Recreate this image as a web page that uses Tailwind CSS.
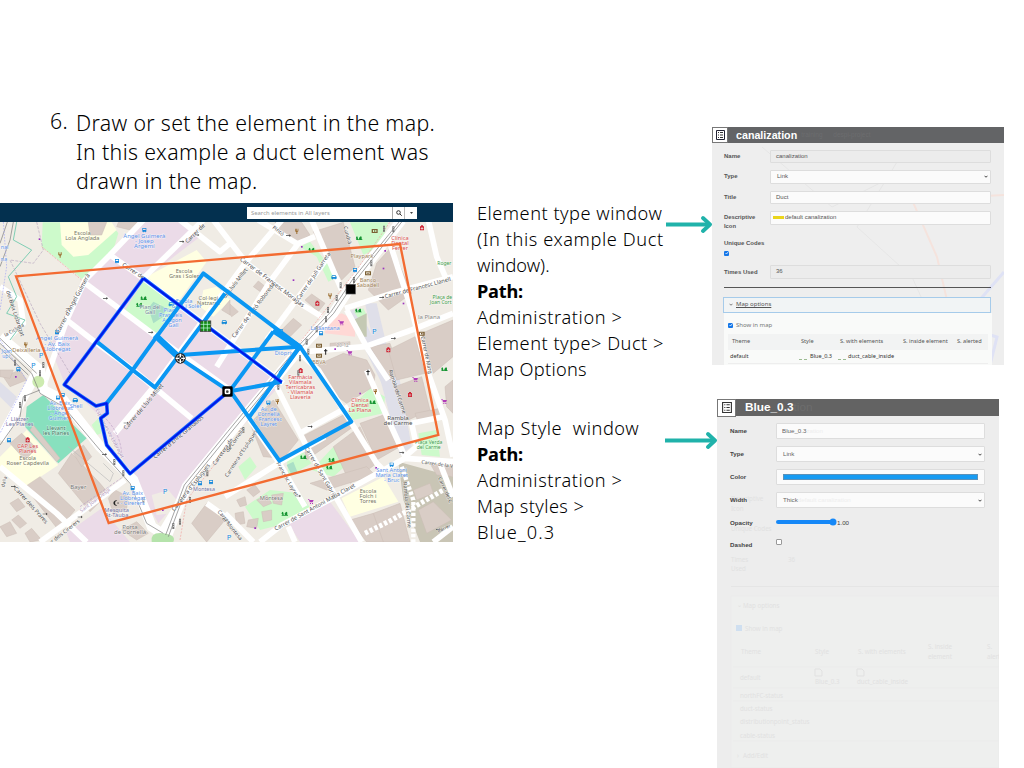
<!DOCTYPE html>
<html lang="en">
<head>
<meta charset="utf-8">
<title>Draw the element in the map</title>
<script src="https://cdn.jsdelivr.net/npm/@tailwindcss/browser@4"></script>
</head>
<body class="bg-white">
<main class="flex h-[768px] w-[1024px] overflow-hidden bg-white text-black font-['Noto_Sans',sans-serif]">

  <section class="flex w-[453px] shrink-0 flex-col">
    <div class="flex h-[203px] items-start pt-[108px] pl-[50px] text-[21.3px] leading-[29px] font-light tracking-[0.33px]">
      <span class="-mt-[2px] w-[26px] shrink-0">6.</span>
      <div class="whitespace-nowrap">
        <p>Draw or set the element in the map.</p>
        <p class="tracking-[0.38px]">In this example a duct element was</p>
        <p class="tracking-[0.4px]">drawn in the map.</p>
      </div>
    </div>
    <div class="flex h-[19px] shrink-0 items-center bg-[#03304f] pl-[247px]">
      <div class="flex h-[12px] w-[170px] bg-white text-[5.9px] leading-[12px] text-[#999]">
        <span class="w-[146px] border-r border-[#aaa] pl-[4px] whitespace-nowrap">Search elements in All layers</span>
        <span class="flex w-[12px] items-center justify-center border-r border-[#bbb]">
          <svg class="h-[6px] w-[6px]" viewBox="0 0 12 12" fill="none" stroke="#333" stroke-width="2"><circle cx="5" cy="5" r="3.6"/><path d="M7.8 7.8 11.5 11.5"/></svg>
        </span>
        <span class="flex flex-1 items-center justify-center"><svg class="h-[2px] w-[3px]" viewBox="0 0 6 4"><path d="M0 0H6L3 4Z" fill="#444"/></svg></span>
      </div>
    </div>
    <svg class="block h-[320px] w-[453px] shrink-0" viewBox="0 66 1359 960" preserveAspectRatio="none">
      <rect y="60" width="1359" height="970" fill="#f0ece5"/>
      <!-- land use -->
      <g fill="#ebdbe8">
        <path d="M150 440 250 240 330 165 430 67H545L600 110 430 240 690 430 850 545 690 720 475 970 390 820 300 650 190 540Z"/>
        <path d="M200 1000 305 925 390 1026H210Z"/><path d="M865 970 990 905 1080 1026H900Z"/>
      </g>
      <path d="M455 885 505 870 530 900 515 940 470 945Z" fill="#f0ece5"/>
      <g fill="#dfdfe9"><path d="M1040 335 1075 325 1175 525 1225 700 1200 760 1150 560Z"/><path d="M1095 310 1130 310 1180 520 1140 520Z"/><path d="M1135 515 1195 515 1235 740 1200 765Z"/><path d="M1190 570 1270 545 1275 575 1200 590Z"/><path d="M0 545 50 590 40 630 0 590Z"/></g>
      <g fill="#cdfacb">
        <path d="M128 67 125 140 250 240 340 150 355 100 330 67Z"/><path d="M430 245 375 330 465 405 535 310Z"/>
        <path d="M1050 67 1090 165 1140 140 1165 67Z"/><path d="M900 140 930 125 1015 230 985 245 950 170Z"/>
        <path d="M1062 335 1090 325 1100 345 1075 355Z"/><path d="M735 920 810 870 900 880 935 930 860 970 780 990Z"/>
        <path d="M860 770 900 745 935 790 865 830Z"/><path d="M935 810 1000 740 1045 790 1000 830Z"/>
        <path d="M1030 645 1110 565 1155 590 1150 640 1060 660Z"/><path d="M715 800 750 770 770 800 735 840Z"/>
        <path d="M1255 700 1310 690 1320 770 1265 765Z"/><path d="M275 675 295 655 305 700 290 705Z"/>
        <path d="M1290 850 1315 840 1330 870 1300 880Z"/>
      </g>
      <g fill="#ffffe2"><path d="M180 67 185 135 220 170 265 165 350 90 335 67Z"/><path d="M440 230 590 150 620 185 535 305Z"/><path d="M610 270 650 260 690 300 640 350 600 320Z"/><path d="M0 770 80 690 175 795 70 865 0 800Z"/><path d="M1025 895 1150 830 1195 905 1050 950Z"/></g>
      <path d="M80 620 130 585 260 715 175 790 75 680Z" fill="#88e0be"/>
      <path d="M445 325 460 305 500 325 490 350 460 370Z M860 795 880 785 892 815 875 825Z" fill="#aadfc6"/>
      <path d="M980 360 1025 340 1065 360V410L975 400Z" fill="#ffd8d5"/>
      <path d="M1195 785 1359 830V1026H1260L1210 900Z" fill="#c9c5b5"/>
      <path d="M1060 360 1100 340 1100 410 1080 410Z" fill="#c4c9b3"/>
      <!-- buildings -->
      <g fill="#d9cdc6" stroke="#cbbdb4" stroke-width="1.5">
        <path d="M265 67 270 105 305 105 320 67Z"/><path d="M355 67 350 80 390 90 425 67Z"/>
        <path d="M825 67 845 100 890 130 930 105 905 67Z"/><path d="M940 95 1030 67 1065 200 1025 240Z"/>
        <path d="M1130 190 1175 140 1235 280 1165 330 1105 270Z"/><path d="M760 260 775 243 800 263 785 278Z"/>
        <path d="M915 300 935 282 975 310 955 335Z"/><path d="M845 390 880 355 905 375 870 410Z"/>
        <path d="M675 325 690 312 715 335 695 350Z"/><path d="M665 330 690 300 690 345Z"/>
        <path d="M990 430 1050 425V445H990Z"/><path d="M940 500 1030 460 1100 480 1125 525 1120 560 1040 610 985 570Z"/>
        <path d="M1110 440 1170 430 1200 520 1170 540Z"/><path d="M1165 450 1245 410 1275 520 1190 540Z"/>
        <path d="M1265 400 1359 360V470L1300 520Z"/><path d="M1185 560 1265 530 1290 630 1225 660Z"/>
        <path d="M750 670 820 600 895 720 850 775 790 770Z"/><path d="M905 710 1040 640 1060 680 920 780Z"/>
        <path d="M1000 740 1080 680 1130 790 1050 850Z"/><path d="M1080 670 1150 645 1200 740 1130 780Z"/>
        <path d="M930 850 1100 800 1125 825 980 870Z"/><path d="M1120 940 1200 910 1230 1026H1110Z"/>
        <path d="M1050 960 1120 940 1150 1026H1100Z"/><path d="M1255 930 1300 905 1355 960 1280 1000Z"/>
        <path d="M1240 870 1290 850 1300 880 1250 900Z"/><path d="M1290 790 1359 800V830L1310 825Z"/>
        <path d="M1245 640 1320 625 1325 650 1255 670Z"/><path d="M1335 560 1359 540V640L1340 620Z"/>
        <path d="M175 820 215 760 300 850 325 880 270 935Z"/><path d="M75 860 120 830 225 930 175 990Z"/>
        <path d="M220 760 250 735 275 770 245 800Z"/><path d="M30 730 65 700 110 745 75 780Z"/>
        <path d="M90 690 100 675 180 775 170 785Z"/><path d="M325 895 345 870 385 890 380 925 340 940Z"/>
        <path d="M365 990 410 965 445 1000 410 1020Z"/><path d="M10 530 60 510 80 540 30 560Z"/><path d="M0 510 40 510 30 535 0 530Z"/>
        <path d="M575 970 620 910 675 960 620 1026Z"/><path d="M0 980 30 965 50 1000 20 1010Z"/><path d="M35 960 55 945 80 970 60 985Z"/><path d="M75 1000 95 985 125 1020 90 1026Z"/><path d="M30 910 55 895 75 920 50 935Z"/>
        <path d="M740 870 765 855 780 875 760 890Z"/><path d="M770 900 800 885 815 910 790 920Z"/><path d="M710 900 735 890 740 915 720 920Z"/><path d="M705 940 730 935 735 970 710 975Z"/><path d="M745 960 775 955 770 985 740 980Z"/><path d="M785 935 815 930 815 960 790 965Z"/><path d="M815 885 850 880 845 915 820 910Z"/>
      </g>
      <!-- streets -->
      <g fill="none" stroke="#fff" stroke-width="17" stroke-linejoin="round">
        <path d="M130 560 200 360 255 240 330 165 435 55"/><path d="M330 165 430 235 690 430 850 550"/>
        <path d="M250 245 470 410 690 570"/><path d="M200 360 290 430 400 510 575 655"/>
        <path d="M345 700 470 550 735 190 850 55"/><path d="M430 235 610 60"/><path d="M540 60 660 155 690 130"/>
        <path d="M640 60 740 190 900 310 965 350"/><path d="M650 500 810 245 895 130 945 110"/><path d="M775 60 890 130"/>
        <path d="M800 420 985 170"/><path d="M935 60 1025 270"/><path d="M1035 325 1175 280 1359 230"/>
        <path d="M1160 100 1235 330 1285 520 1335 660 1359 770"/><path d="M1285 60 1310 170 1340 240"/>
        <path d="M1359 340 1235 390 1095 440 915 455"/><path d="M1040 330 1105 450 1165 540"/>
        <path d="M830 560 915 730 1085 1026"/><path d="M900 700 1045 620"/><path d="M900 460 955 510 1130 790 1150 810"/>
        <path d="M780 1026 845 975 1025 880 1215 775 1359 785"/><path d="M750 660 835 785 915 920"/>
        <path d="M675 890 835 790 975 710"/><path d="M1100 510 1165 660 1215 770 1250 740 1235 670"/>
        <path d="M675 940 760 1026"/><path d="M865 980 885 1026"/><path d="M1235 670 1330 650"/>
        <path d="M0 800 170 940 260 1026"/><path d="M120 1026 375 840"/><path d="M690 690 540 900 480 1000"/>
        <path d="M1300 1026 1359 980"/><path d="M1320 790 1359 890"/><path d="M0 260 60 300 70 370 10 430"/>
        <path d="M620 910 690 960"/>
      </g>
      <g fill="none" stroke="#fff" stroke-width="30"><path d="M1205 60 1065 240 1000 340 905 440 690 700 560 860 500 1010"/><path d="M0 410 120 510 130 570 190 600 300 740 400 840 455 980 500 1010"/><path d="M0 720 70 590 110 520"/></g>
      <path d="M1095 1000 1175 960 1330 870" stroke="#fff" stroke-width="15" stroke-dasharray="10 6" fill="none"/>
      <path d="M1205 800 1240 900V1026" stroke="#fff" stroke-width="13" stroke-dasharray="10 6" fill="none"/>
      <circle cx="115" cy="545" r="18" fill="#cdebb0"/><path d="M455 1026Q450 995 490 1000T520 1026Z" fill="#b5e3ab"/>
      <!-- railways, paths and limits -->
      <g fill="none" stroke="#777" stroke-width="2">
        <path d="M1197 66 1060 235 993 335 898 435 683 695 553 855 497 1005"/><path d="M1205 66 1068 240 1001 340 906 440 691 700 561 860 505 1010"/>
        <path d="M0 430 95 520 120 580 190 620 300 750 390 850 440 970 490 1000"/><path d="M40 66 30 120 0 200M0 415 110 520M0 735 60 650 70 590 120 570"/><path d="M22 66 0 130M0 445 85 525"/>
      </g>
      <g fill="none" stroke-width="2"><path d="M50 66 40 120 95 150 25 230 50 290 20 340 75 360 30 420" stroke="#7fceb4" stroke-width="3"/><path d="M110 66 130 150 100 190 30 180 120 370 210 520" stroke="#b8a8c0" stroke-dasharray="9 4"/><path d="M10 66 20 200 0 330M0 420 80 540 0 700" stroke="#a3a6f5" stroke-dasharray="5 4"/><path d="M125 140 245 240M890 440 1070 210 1170 66M540 1020 560 900 690 735" stroke="#f2a3a0" stroke-dasharray="6 4"/><path d="M300 640Q360 690 365 760M240 920 370 830" stroke="#bea4c8" stroke-dasharray="8 4"/><path d="M205 740 330 845 340 820 310 790" stroke="#bbb"/></g>
      <g id="poi"></g>
      <g id="labels" font-family="Noto Sans, sans-serif" stroke="#fff" stroke-width="3" stroke-opacity=".55" paint-order="stroke"></g>
      <!-- drawn ducts -->
      <g fill="none" stroke="#0a97f3" stroke-width="12" stroke-linejoin="round">
        <path d="M320 610 398 510 470 410 610 220 900 440 840 520"/><path d="M293 427 398 510 465 562 675 280"/>
        <path d="M470 410 540 475 685 572"/><path d="M540 465 900 440"/><path d="M690 572 820 395"/><path d="M690 574 845 545"/>
        <path d="M690 572 838 782 1054 665 900 440 745 655"/>
      </g>
      <path d="M465 405 540 475M820 390 895 440" stroke="#0a97f3" stroke-width="19"/>
      <path d="M430 235 193 554 288 618 320 610 322 640 302 655 320 735 390 821 685 575M430 235 845 547" fill="none" stroke="#1268ff" stroke-width="11" stroke-linejoin="round"/>
      <path d="M430 235 193 554 288 618 320 610 322 640 302 655 320 735 390 821 685 575M430 235 845 547" fill="none" stroke="#0018e8" stroke-width="6" stroke-linejoin="round"/>
      <path d="M48 229 1200 132 1315 705 326 969Z" fill="none" stroke="#f36b31" stroke-width="7"/>
      <!-- nodes -->
      <rect x="601" y="363" width="31" height="31" fill="#138a13" stroke="#444" stroke-width="3"/><path d="M611 363V394M622 363V394M601 373H632M601 384H632" stroke="#cfe" stroke-width="2"/>
      <circle cx="541" cy="475" r="16" fill="#222"/><circle cx="541" cy="475" r="11" fill="none" stroke="#fff" stroke-width="2"/><path d="M541 461V489M527 475H555" stroke="#fff" stroke-width="4"/><circle cx="541" cy="475" r="3" fill="#222"/>
      <rect x="1038" y="253" width="28" height="29" fill="#000" stroke="#555" stroke-width="2"/>
      <rect x="667" y="559" width="31" height="31" rx="4" fill="#000"/><rect x="674" y="566" width="17" height="17" rx="4" fill="#fff"/><circle cx="682" cy="575" r="4" fill="#444"/>
    </svg>
  </section>

  <section class="flex w-[212px] shrink-0 flex-col pt-[200px] pl-[24px] text-[18.2px] leading-[26px] font-light whitespace-nowrap tracking-[0.5px]">
    <div class="h-[215px]">
      <p>Element type window</p><p class="tracking-[0.6px]">(In this example Duct</p><p class="tracking-normal">window).</p>
      <p class="font-bold tracking-[-0.2px]">Path:</p>
      <p class="tracking-[0.6px]">Administration &gt;</p><p>Element type&gt; Duct &gt;</p><p class="tracking-[0.3px]">Map Options</p>
    </div>
    <div>
      <p class="whitespace-pre tracking-[0.56px]">Map Style  window</p>
      <p class="font-bold tracking-[-0.2px]">Path:</p>
      <p class="tracking-[0.6px]">Administration &gt;</p><p class="tracking-[0.4px]">Map styles &gt;</p><p class="tracking-[1.1px]">Blue_0.3</p>
    </div>
  </section>

  <section class="flex w-[359px] shrink-0 flex-col pt-[127px]">
    <div class="flex h-[238px]">
      <svg class="mt-[88px] h-[20px] w-[47px] shrink-0" viewBox="0 0 47 20" fill="none" stroke="#20b2aa" stroke-width="3.8"><path d="M1 9.5H45"/><path d="M38 3 45 9.5 38 16" stroke-linecap="round" stroke-linejoin="round"/></svg>
      <div class="relative flex w-[292px] flex-col overflow-hidden bg-[#eeeeee] font-['Liberation_Sans',sans-serif] text-[6px] text-[#555]">
        <svg class="absolute inset-0 h-full w-full" viewBox="0 0 292 238" fill="none"><path d="M292 68 200 73 225 130 250 238" stroke="#f5e3dd" stroke-width="2"/><path d="M292 145 246 198 285 210 278 238" stroke="#dfe2f5" stroke-width="3"/><path d="M185 35 145 100 200 150 240 238M50 20 120 80 170 55" stroke="#e6e6e6"/></svg>
        <div class="relative flex h-[16px] shrink-0 items-center bg-[#636466] text-[10.7px] font-bold text-white">
          <span class="flex h-[16px] w-[16px] shrink-0 items-center justify-center border border-[#777] bg-white"><svg class="h-[10px] w-[9px]" viewBox="0 0 9 10" fill="none" stroke="#333"><path d="M.5.5H8.500V9.500H.5Z" stroke="#223"/><path d="M2 2.500H3M4 2.500H7M2 5H3M4 5H7M2 7.500H3M4 7.500H7"/></svg></span>
          <span class="pl-[8px]">canalization</span>
          <span class="pl-1 text-[6.5px] font-normal text-[#6c6d6f]">training &nbsp; &nbsp; &nbsp;despi-project</span>
        </div>
        <div class="relative flex flex-col gap-[7px] pt-[6.5px] pr-[13px] pl-[12px]">
          <div class="flex h-[13.5px]"><b class="w-[46px] leading-[12px]">Name</b><span class="flex flex-1 items-center rounded-[1px] border border-[#ddd] bg-[#ececec] pl-[5px]">canalization</span></div>
          <div class="flex h-[13.5px]"><b class="w-[46px] leading-[12px]">Type</b><span class="flex flex-1 items-center justify-between rounded-[1px] border border-[#ddd] bg-[#fbfbfb] pr-[2px] pl-[6px]">Link<svg class="h-[3px] w-[4px]" viewBox="0 0 8 5" fill="none" stroke="#444" stroke-width="2"><path d="M1 1 4 4 7 1"/></svg></span></div>
          <div class="flex h-[13.5px]"><b class="w-[46px] leading-[12px]">Title</b><span class="flex flex-1 items-center rounded-[1px] border border-[#ddd] bg-[#fbfbfb] pl-[5px]">Duct</span></div>
          <div class="flex h-[13.5px]"><b class="w-[46px] pt-[2px] text-[5.8px] leading-[8.5px]">Descriptive<br>Icon</b><span class="flex flex-1 items-center rounded-[1px] border border-[#ddd] bg-[#fbfbfb] pl-[2px]"><i class="mr-[1px] h-[3px] w-[11px] bg-[#ead51b]"></i>default canalization</span></div>
        </div>
        <b class="relative pt-[14px] pl-[12px] leading-[8px]">Unique Codes</b>
        <span class="relative mt-[4px] ml-[12px] flex h-[5px] w-[5px] shrink-0 items-center justify-center rounded-[1px] bg-[#1577e8]"><svg class="h-[4px] w-[4px]" viewBox="0 0 8 8" fill="none" stroke="#fff" stroke-width="1.5"><path d="M1 4 3 6 7 1"/></svg></span>
        <div class="relative mt-[9px] flex h-[14px] shrink-0 pr-[13px] pl-[12px]"><b class="w-[46px] leading-[14px]">Times Used</b><span class="flex flex-1 items-center rounded-[1px] border border-[#ddd] bg-[#ececec] pl-[5px]">36</span></div>
        <div class="relative mr-[13px] ml-[12px] mt-[8.5px] h-px shrink-0 bg-[#555]"></div>
        <div class="relative mr-[13px] ml-[11px] mt-[8.5px] flex h-[16px] shrink-0 items-center gap-[3px] border border-[#a6cbea] bg-[#f1f4f5] pl-[5px] font-['Noto_Sans',sans-serif] text-[6px]"><svg class="h-[3px] w-[4px]" viewBox="0 0 8 5" fill="none" stroke="#555" stroke-width="1.5"><path d="M1 1 4 4 7 1"/></svg><u>Map options</u></div>
        <div class="relative mx-[12px] flex flex-1 flex-col bg-[#f9faf9] px-[4px] pt-[8px] font-['Noto_Sans',sans-serif] text-[5.6px]">
          <div class="flex h-[9px] shrink-0 items-center gap-[3px]"><span class="flex h-[5px] w-[5px] items-center justify-center rounded-[1px] bg-[#1577e8]"><svg class="h-[4px] w-[4px]" viewBox="0 0 8 8" fill="none" stroke="#fff" stroke-width="1.5"><path d="M1 4 3 6 7 1"/></svg></span><span class="text-[6px] text-[#777]">Show in map</span></div>
          <div class="mt-[4px] grid h-[16px] shrink-0 grid-cols-[69px_39px_63px_54px_1fr] items-center bg-[#f2f3f3] pl-[4px] whitespace-nowrap"><span>Theme</span><span>Style</span><span>S. with elements</span><span>S. inside element</span><span>S. alerted</span></div>
          <div class="flex h-[14px] shrink-0 items-center border-b border-[#eee] pl-[2px] text-[#333]"><span class="w-[69px]">default</span><span class="flex h-[8px] w-[11px] items-end gap-[2px]"><i class="h-px w-[3px] bg-[#9cbb91]"></i><i class="h-px w-[3px] bg-[#9cbb91]"></i></span><span class="w-[28px]">Blue_0.3</span><span class="flex h-[8px] w-[10px] items-end gap-[2px]"><i class="h-px w-[3px] bg-[#9cbb91]"></i><i class="h-px w-[3px] bg-[#9cbb91]"></i></span><span>duct_cable_inside</span></div>
          <span class="pl-[2px] leading-[7px]">northFC-status</span>
        </div>
      </div>
    </div>

    <div class="mt-[34px] flex h-[369px] shrink-0">
      <svg class="mt-[31px] h-[20px] w-[52px] shrink-0" viewBox="0 0 52 20" fill="none" stroke="#20b2aa" stroke-width="3.8"><path d="M0 10.5H50"/><path d="M43 4 50 10.5 43 17" stroke-linecap="round" stroke-linejoin="round"/></svg>
      <div class="relative flex w-[282px] flex-col overflow-hidden bg-[#ededed] font-['Liberation_Sans',sans-serif] text-[6.2px] text-[#666]">
        <svg class="absolute inset-0 h-full w-full" viewBox="705 399 282 369" font-family="Noto Sans, sans-serif" font-size="6.2" fill="#e1e1e1">
          <g transform="translate(-12 0)">
          <text x="731" y="501">Descriptive</text><text x="731" y="511">Icon</text><text x="731" y="531">Unique Codes</text><text x="731" y="562">Times</text><text x="731" y="571">Used</text><text x="788" y="562">36</text>
          <path d="M731 586.500H999" stroke="#e5e5e5"/>
          <path d="M731 596H999V768H731Z" fill="#eeefee" stroke="#ebebeb"/>
          <text x="737" y="607">⌄</text><text x="743" y="608">Map options</text>
          <rect x="736" y="625" width="6" height="6" fill="#cfdff0"/><text x="745" y="631">Show in map</text>
          <text x="741" y="654">Theme</text><text x="815" y="654">Style</text><text x="858" y="654">S. with elements</text><text x="928" y="649">S. inside</text><text x="928" y="659">element</text><text x="987" y="649">S.</text><text x="987" y="659">alerted</text>
          <path d="M733 667H999M733 688H999M733 701H999M733 741H999" stroke="#ebebeb"/>
          <path d="M815 669h5l2 2v5h-7ZM857 669h5l2 2v5h-7Z" fill="none" stroke="#e1e1e1"/>
          <text x="740" y="680">default</text><text x="815" y="684">Blue_0.3</text><text x="857" y="684">duct_cable_inside</text><text x="740" y="698">northFC-status</text><text x="740" y="711">duct-status</text><text x="740" y="724">distributionpoint_status</text><text x="740" y="738">cable-status</text><text x="737" y="758">›</text><text x="743" y="758">Add/Edit</text>
          </g>
        </svg>
        <div class="relative flex h-[17px] shrink-0 items-center bg-[#636363] text-[11.8px] font-bold text-white">
          <span class="flex h-[18px] w-[19px] shrink-0 items-center justify-center border border-[#777] bg-white"><svg class="h-[11px] w-[10px]" viewBox="0 0 9 10" fill="none" stroke="#333"><path d="M.5.5H8.500V9.500H.5Z"/><path d="M2 2.500H3M4 2.500H7M2 5H3M4 5H7M2 7.500H3M4 7.500H7"/></svg></span>
          <span class="pl-[9px]">Blue_0.3</span><span class="font-normal text-[#6d6d6d]">tion</span>
        </div>
        <div class="relative flex flex-col gap-[7px] pt-[7px] pr-[14px] pl-[13px]">
          <div class="flex h-[16px]"><b class="w-[46px] leading-[16px] text-[#444]">Name</b><span class="flex flex-1 items-center rounded-[1px] border border-[#ddd] bg-[#fbfbfb] pl-[5px]">Blue_0.3<span class="text-[#eee]">zation</span></span></div>
          <div class="flex h-[16px]"><b class="w-[46px] leading-[16px] text-[#444]">Type</b><span class="flex flex-1 items-center justify-between rounded-[1px] border border-[#ddd] bg-[#fbfbfb] pr-[2px] pl-[6px]">Link<svg class="h-[3px] w-[4px]" viewBox="0 0 8 5" fill="none" stroke="#444" stroke-width="2"><path d="M1 1 4 4 7 1"/></svg></span></div>
          <div class="flex h-[16px]"><b class="w-[46px] leading-[16px] text-[#444]">Color</b><span class="flex flex-1 items-center rounded-[1px] border border-[#ddd] bg-[#fbfbfb] px-[6px]"><i class="h-[6px] flex-1 border border-[#5b91b8] bg-[#169bf2]"></i></span></div>
          <div class="flex h-[16px]"><b class="w-[46px] leading-[16px] text-[#444]">Width</b><span class="flex flex-1 items-center justify-between rounded-[1px] border border-[#ddd] bg-[#fbfbfb] pr-[2px] pl-[6px]"><span>Thick<span class="text-[#eee]">default canalization</span></span><svg class="h-[3px] w-[4px]" viewBox="0 0 8 5" fill="none" stroke="#444" stroke-width="2"><path d="M1 1 4 4 7 1"/></svg></span></div>
          <div class="flex h-[16px] items-center text-[#444]"><b class="w-[45px]">Opacity</b><svg class="-mt-[3px] h-[8px] w-[62px]" viewBox="0 0 62 8"><path d="M3 4H58" stroke="#1688f7" stroke-width="4" stroke-linecap="round"/><circle cx="58" cy="4" r="3.5" fill="#1688f7"/></svg>1.00</div>
          <div class="-mt-[1px] flex h-[16px] items-center"><b class="w-[46px] text-[#444]">Dashed</b><i class="-mt-[6px] h-[5.5px] w-[5.5px] rounded-[1px] border border-[#999] bg-white"></i></div>
        </div>
      </div>
    </div>
  </section>
</main>
<script>
const NS = "http://www.w3.org/2000/svg";
const B = "#5b93ea", G = "#77775f", K = "#4c4c4c", R = "#d84c4c", V = "#7272a5";
// [x, y, rotation, colour, size, text]; x and y are the middle of the label
const labels = [
 [247,99,0,G,17,"Escola"],[247,115,0,G,17,"Lola Anglada"],[433,108,0,B,18,"Àngel Guimerà"],[433,124,0,B,18,"- Josep"],[433,139,0,B,18,"Argemí"],
 [585,100,-45,K,17,"Carrer de"],[552,212,0,G,17,"Escola"],[552,227,0,G,17,"Gras i Soler"],[400,213,33,K,17,"Carrer de"],[625,293,0,G,17,"Col·legi"],[625,308,0,G,17,"Natzaret"],
 [450,320,0,"#789",17,"Plan del"],[450,336,0,"#789",17,"Gall"],[552,303,0,B,17,"Escola"],[560,319,0,B,17,"Gras i Soler"],[512,331,0,B,17,"Plaça"],[512,346,0,B,17,"Prat dels"],[516,360,0,B,17,"Aragon"],[516,375,0,B,17,"i Gall"],
 [218,310,-62,K,18,"Carrer d'Àngel Guimerà"],[46,340,72,K,17,"del Baix Llobregat"],[42,390,-30,K,15,"la Ciclista"],[171,415,0,B,18,"Àngel Guimerà"],[171,431,0,B,18,"- Av. Baix"],[171,447,0,B,18,"Llobregat"],[79,451,0,"#9c7a4e",17,"Deixalleria"],
 [14,142,0,B,16,"nal"],[12,176,0,B,16,"na"],[20,455,0,B,15,"Joan"],[18,470,0,B,15,"upí"],
 [705,250,-52,K,17,"de Lluís Millet"],[817,246,37,K,18,"Carrer de Francesc Moragas"],[760,330,-53,K,17,"Carrer de Pintó Roboreda"],[940,228,-56,K,17,"Carrer de Juli Garreta"],[835,92,38,K,16,"Pintó"],[1043,105,75,K,16,"Cundrà"],
 [1200,114,0,R,17,"Clínica"],[1200,129,0,R,17,"Dental"],[1200,143,0,R,17,"Ferrer"],[1086,167,0,"#a08258",17,"Playpark"],[1104,239,0,"#a08258",17,"Banco"],[1104,254,0,"#a08258",17,"Sabadell"],[1253,263,-15,K,17,"Carrer de Francesc Llanell"],
 [975,383,0,B,17,"La Santana"],[1287,352,0,"#888",18,"la Plana"],[1028,437,0,"#999",14,"20-12"],[957,485,0,"#a08258",16,"BBVA"],[1333,190,0,"#3b9b48",15,"Roger"],[1327,293,0,"#3b9b48",15,"Plaça de"],[1322,308,0,"#3b9b48",15,"Joan Cort"],[855,459,0,B,17,"Diòprivi"],[1280,465,78,K,16,"Carrer de Marg"],
 [59,656,0,V,17,"Llàtzer"],[59,671,0,V,17,"Les Planes"],[180,608,0,B,17,"Av. Baix"],[180,623,0,B,17,"Llobregat"],[180,638,0,B,17,"- Àngel"],[180,653,0,B,17,"Guimerà"],[228,617,0,B,17,"Shell"],[168,683,0,"#447762",17,"Llevant"],[168,699,0,"#447762",17,"les Planes"],
 [83,739,0,R,17,"CAP Les"],[83,754,0,R,17,"Planes"],[83,774,0,G,17,"Escola"],[83,789,0,G,17,"Roser Capdevila"],[235,862,0,"#777",18,"Bayer"],[350,931,0,V,17,"Mesquita"],[350,946,0,V,17,"At-Tàuba"],[398,880,0,B,17,"Av. Baix"],[398,894,0,B,17,"Llobregat"],[398,909,0,B,17,"- Cirerers"],
 [390,981,0,"#777",18,"Porta"],[390,997,0,"#777",18,"de Cornellà"],[93,915,48,K,17,"Carrer dels Prares"],[192,996,-38,K,16,"er dels Cirerers"],[12,845,-75,K,15,"dalla"],[285,900,-37,"#ab91b5",15,"Sant Joan Despí"],[330,700,62,"#ab91b5",15,"Esplugues de Llobregat"],
 [430,620,-50,K,18,"Carrer de Lluís Millet"],[535,711,-40,K,17,"Carrer d'Enric Granados"],[572,862,-52,K,17,"Carretera d'Esplugues"],[612,867,0,V,16,"Montesa"],[668,755,-55,K,16,"Carretera de"],[672,950,48,K,16,"Carrer"],
 [806,627,0,B,17,"Av. de"],[806,642,0,B,17,"Cornellà"],[806,657,0,B,17,"- Francesc"],[806,672,0,B,17,"Layret"],[901,531,0,R,17,"Farmàcia"],[901,546,0,R,17,"Vilamala"],[901,561,0,R,17,"Terricabras"],[901,576,0,R,17,"- Vilamala"],[901,591,0,R,17,"Llaveria"],
 [705,720,-55,K,16,"de Cornellà"],[723,760,-57,K,16,"Carretera d'Esplugues"],[862,837,60,K,16,"Francesc Layret"],[963,818,60,K,17,"Carrer de Sant Gabriel"],[944,921,-29,K,17,"Carrer de Sant Antoni Maria Claret"],[814,893,0,"#777",17,"Montesa"],[697,985,50,K,16,"er Montesa"],
 [1080,601,0,R,17,"Clínica"],[1080,616,0,R,17,"Dental"],[1080,631,0,R,17,"La Plana"],[1194,653,0,K,18,"Rambla"],[1194,668,0,K,18,"del Carme"],[1192,575,72,K,16,"Rambla del Carme"],[1286,728,0,"#3b9b48",15,"Plaça Verda"],[1286,743,0,"#3b9b48",15,"del Carme"],
 [1175,810,0,B,17,"Sant Antoni"],[1175,825,0,B,17,"Maria Claret"],[1175,840,0,B,17,"- Bruc"],[1104,873,0,G,17,"Escola"],[1104,888,0,G,17,"Folch i"],[1104,903,0,G,17,"Torres"],[1312,792,8,K,15,"Carrer de la V"],[1222,915,84,K,16,"Rambla del Carme"],[1336,870,66,K,15,"Carrer del C"],[1332,985,-25,K,14,"Carrer"],
];
const L = document.getElementById("labels");
for (const [x, y, r, c, s, t] of labels) {
  const e = document.createElementNS(NS, "text");
  e.setAttribute("transform", `translate(${x} ${y}) rotate(${r})`);
  e.setAttribute("text-anchor", "middle"); e.setAttribute("dy", ".35em");
  e.setAttribute("fill", c); e.setAttribute("font-size", s); e.textContent = t; L.append(e);
}
// point-of-interest symbols: kind -> [path, fill]
const kinds = {
  bus: ["M-6 -6H6V5H4V7H2V5H-2V7H-4V5H-6ZM-4 -4V0H4V-4Z", "#1789dc"],
  tree: ["M-9 5V3H-6Q-12 0 -8 -5T-3 1V3H1Q-3 0 3 -5T8 3H10V5Z", "#159432"],
  red: ["M-6 -5H-3V-8H3V-5H6V7H-6ZM-1 -3V0H-4V2H-1V5H1V2H4V0H1V-3Z", "#cf2535"],
  bank: ["M-9 -6H9V6H-9ZM-5 -3V3H5V-3ZM-2 -2H2V2H-2Z", "#7c6034"],
  shop: ["M-9 -7H-6L-4 -4H8L5 3H-4L-6 -5H-9ZM-3 5H0V8H-3ZM3 5H6V8H3Z", "#b03ab8"],
  car: ["M-6 -5H5L8 0V5H5V7H2V5H-3V7H-6V5H-8V0ZM-5 -3V0H5L3 -3Z", "#168bd8"],
  fork: ["M-6 -8H-4V-2H-2V-8H0V-2H2V-8H4V0L1 2V8H-2V2L-6 0Z", "#9b6c2e"],
  cross: ["M-1.500 -9H1.500V-5H5V-2H1.500V8H-1.500V-2H-5V-5H-1.500Z", "#222"],
  signal: ["M-3 -9H3V9H-3ZM-1 -6V-3H1V-6ZM-1 0V3H1V0Z", "#777"],
  arrow: ["M-7 -1H3V-4L8 0L3 4V1H-7Z", "#444"],
  moon: ["M4 -7A8 8 0 1 0 4 7A6 6 0 1 1 4 -7ZM5 -2L9 0L5 3Z", "#222"],
  dot: ["M-2 -2H3V3H-2Z", "#9b33c0"],
};
const pois = [
 ["bus",433,90],["bus",351,183],["bus",171,397],["bus",55,508],["bus",27,721],["bus",188,585],["bus",174,593],["bus",398,864],["bus",600,850],["bus",633,846],["bus",805,608],["bus",1065,210],["bus",963,400],["bus",1175,794],["bus",843,394],
 ["fork",181,165],["fork",78,435],["fork",833,605],["fork",1127,575],["tree",431,295],["tree",418,315],["tree",1077,115],["tree",935,150],["tree",1333,508],["tree",910,772],["tree",995,780],["tree",988,803],["tree",1118,607],["tree",854,942],["tree",1075,332],
 ["red",1266,84],["red",952,310],["red",1165,450],["red",902,512],["red",83,720],["red",1230,584],["bank",1104,220],["bank",957,437],["bank",957,467],["bank",1265,401],["bank",1124,93],["fork",891,94],["fork",991,288],
 ["shop",1049,458],["shop",1024,368],["shop",1246,538],["shop",1333,604],["shop",933,904],["cross",977,456],["cross",1104,518],["car",673,366],["car",1002,231],["car",226,600],["moon",348,909],["car",514,312],
 ["signal",1152,86],["signal",1180,88],["signal",1114,190],["signal",1062,240],["signal",1022,256],["signal",1010,294],["signal",984,330],["signal",978,358],["signal",950,388],["signal",920,425],["signal",925,455],["signal",900,475],["signal",895,520],["signal",835,560],["signal",45,488],["signal",130,495],["signal",60,615],["signal",75,595],["signal",120,520],["signal",343,786],["signal",370,820],["signal",430,900],["signal",520,978],["signal",540,965],["signal",570,900],["signal",622,820],["signal",690,740],["signal",730,690],
 ["arrow",316,295],["arrow",452,397],["arrow",590,105],["arrow",545,125],["arrow",378,669],["arrow",40,860],["arrow",135,942],["arrow",240,951],["arrow",313,763],["arrow",865,107],["arrow",1145,292],["arrow",1180,415],["arrow",930,680],["arrow",895,888],["arrow",1315,988],["arrow",1205,758],
 ["dot",118,117],["dot",47,530],["dot",905,140],["dot",1150,205],["dot",1155,152],["dot",1210,310],["dot",1080,580],["dot",1128,803],["dot",765,984],["dot",488,930],["dot",1005,447],["dot",880,240],
];
const P = document.getElementById("poi");
for (const [k, x, y] of pois) {
  const e = document.createElementNS(NS, "path");
  e.setAttribute("d", kinds[k][0]); e.setAttribute("fill", kinds[k][1]); e.setAttribute("fill-rule", "evenodd");
  e.setAttribute("transform", `translate(${x} ${y})`); P.append(e);
}
for (const [x, y] of [[123,466],[100,496],[1123,395],[495,874],[687,1011]]) {
  const e = document.createElementNS(NS, "text");
  e.setAttribute("x", x); e.setAttribute("y", y + 8); e.setAttribute("text-anchor", "middle");
  e.setAttribute("fill", "#1789dc"); e.setAttribute("font-size", 23); e.textContent = "P"; L.append(e);
}
</script>
</body>
</html>
